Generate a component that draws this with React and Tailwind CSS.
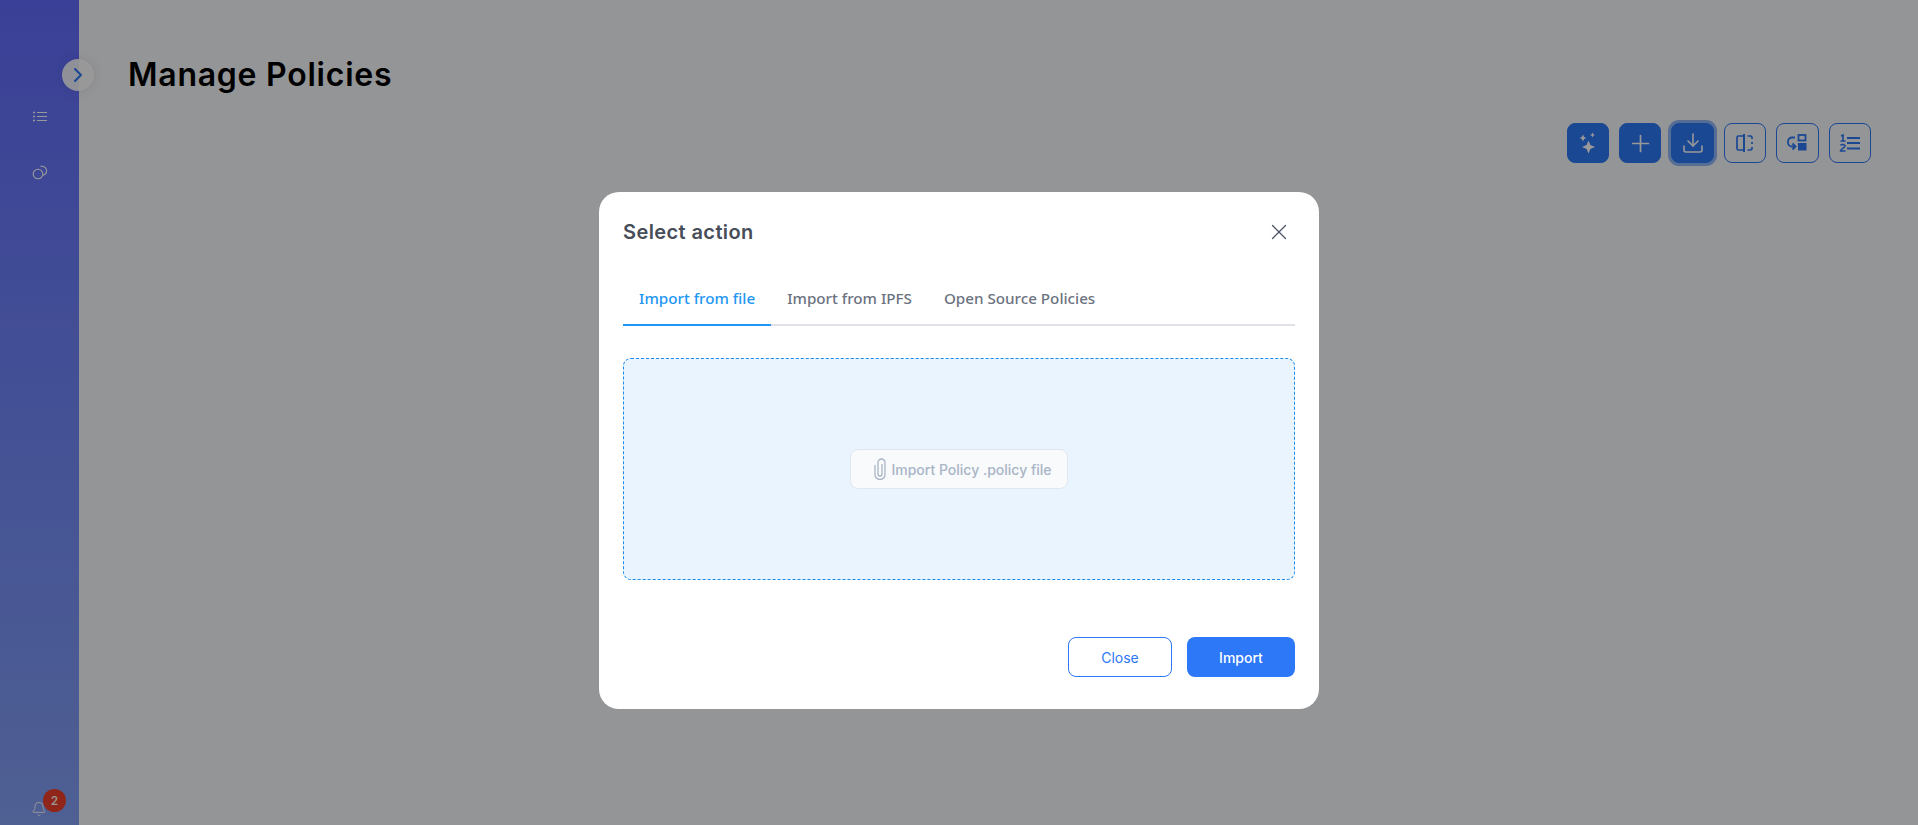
import { ChevronRight, Plus, Download, X, Bell } from 'lucide-react';

const TOOLBAR = [
  { key: 'wizard', filled: true },
  { key: 'create', filled: true },
  { key: 'import', filled: true, focus: true },
  { key: 'compare' },
  { key: 'tools' },
  { key: 'ordered' },
];

function ToolIcon({ name }) {
  if (name === 'wizard') {
    return (
      <svg width="22" height="24" viewBox="0 0 22 24" fill="currentColor">
        <path d="M11.500 9.500l1.900 4.600 4.600 1.900-4.600 1.900-1.900 4.600-1.900-4.600L5 16l4.600-1.900z" />
        <path d="M6 3.500l1.100 2.400L9.500 7 7.100 8.100 6 10.500 4.900 8.100 2.500 7l2.400-1.100z" />
        <path d="M15.500 1.500l.8 1.700 1.700.8-1.700.8-.8 1.700-.8-1.700L13 4l1.700-.8z" />
      </svg>
    );
  }
  if (name === 'create') return <Plus size={27} strokeWidth={1.5} />;
  if (name === 'import') return <Download size={24} strokeWidth={1.6} />;
  if (name === 'compare') {
    return (
      <svg width="20" height="20" viewBox="0 0 20 20" fill="none" stroke="currentColor" strokeWidth="1.700">
        <path d="M9 3H3.500A1.500 1.500 0 0 0 2 4.500v11A1.500 1.500 0 0 0 3.500 17H9" />
        <path d="M9 1v18" strokeWidth="2" />
        <path d="M12.500 3h3A1.500 1.500 0 0 1 17 4.500V6M17 9v2M17 14v1.500a1.500 1.500 0 0 1-1.500 1.500h-3" />
      </svg>
    );
  }
  if (name === 'tools') {
    return (
      <svg width="22" height="20" viewBox="0 0 22 20" fill="none" stroke="currentColor" strokeWidth="1.800">
        <rect x="12.500" y="2" width="7" height="5.500" />
        <rect x="12" y="10" width="8.500" height="7.500" fill="currentColor" stroke="none" />
        <path d="M9 4.500H6A4 4 0 0 0 2 8.500v1A4 4 0 0 0 6 13.500h2" />
        <path d="M6.500 10.500l3 3-3 3" />
      </svg>
    );
  }
  return (
    <svg width="22" height="20" viewBox="0 0 22 20" fill="none" stroke="currentColor" strokeWidth="1.800">
      <path d="M8 5h13M8 10h13M8 15.500h13" />
      <path d="M2 3l2-1v6M1.500 8h5" strokeWidth="1.600" />
      <path d="M1.500 12.500c.5-1.500 4.500-1.500 4.500.5 0 1.500-4.500 3-4.500 5h5" strokeWidth="1.600" />
    </svg>
  );
}

function ListIcon() {
  return (
    <svg width="14" height="11" viewBox="0 0 14 11" fill="none" stroke="currentColor" strokeWidth="1.200">
      <path d="M4 1.500h10M4 5.500h10M4 9.500h10" />
      <path d="M0 1.500h2M0 5.500h2M0 9.500h2" strokeWidth="1.600" />
    </svg>
  );
}

function LinkedCircles() {
  return (
    <svg width="16" height="16" viewBox="0 0 16 16" fill="none" stroke="currentColor" strokeWidth="1.100">
      <circle cx="6" cy="10" r="4.800" />
      <path d="M8.500 2.400A4.800 4.800 0 0 1 14.600 6.500a4.800 4.800 0 0 1-3.600 4.700" />
    </svg>
  );
}

function ClipIcon() {
  return (
    <svg width="12" height="22" viewBox="0 0 12 22" fill="none" stroke="currentColor" strokeWidth="1.300">
      <path d="M8 6v10a2 2 0 0 1-4 0V4.500a3.500 3.500 0 0 1 7 0V16.500a5 5 0 0 1-10 0V7" />
    </svg>
  );
}

export default function App() {
  return (
    <div className="relative h-[825px] w-full overflow-hidden flex bg-[#f7f8fc] font-['Inter',sans-serif]">
      {/* Sidebar */}
      <aside className="relative w-[79px] shrink-0 flex flex-col items-center bg-gradient-to-b from-[#626bfc] to-[#84a0f5] text-white">
        <button className="absolute right-[-15px] top-[59px] w-8 h-8 rounded-full bg-white/90 flex items-center justify-center text-[#2c78f6] shadow-[0_0_12px_rgba(0,0,0,0.1)]">
          <ChevronRight size={24} strokeWidth={2} />
        </button>
        <div className="mt-[111px] h-[11px]">
          <ListIcon />
        </div>
        <div className="mt-[42px] h-4">
          <LinkedCircles />
        </div>
        <div className="relative mt-auto mb-[8px] mr-[1px]">
          <Bell size={16} strokeWidth={1.400} />
          <span className="absolute left-[12px] top-[-12px] w-[23px] h-[23px] rounded-full bg-[#f0402a] flex items-center justify-center text-white text-[12px] font-medium">
            2
          </span>
        </div>
      </aside>

      {/* Main content */}
      <main className="flex-1 min-w-0 pl-[49px] pr-[47px]">
        <h1 className="mt-[53px] h-[44px] leading-[44px] text-[32px] font-semibold tracking-[0.75px] text-black">
          Manage Policies
        </h1>
        <div className="mt-[26px] flex justify-end gap-[10px]">
          {TOOLBAR.map(({ key, filled, focus }) => (
            <button
              key={key}
              className={`w-[42.4px] h-10 rounded-[8px] flex items-center justify-center border border-[#2c78f6] ${
                filled ? 'bg-[#2c78f6] text-white' : 'text-[#2c78f6]'
              } ${focus ? 'ring-[3px] ring-[#8fb8f8]' : ''}`}
            >
              <ToolIcon name={key} />
            </button>
          ))}
        </div>
      </main>

      {/* Backdrop + dialog */}
      <div className="absolute inset-0 bg-black/40 flex justify-center items-start pt-[192px]">
        <div className="w-[720px] h-[517px] bg-white rounded-[20px] px-6 pt-[24px] pb-8 flex flex-col">
          <div className="flex items-center justify-between h-8">
            <h2 className="text-[20px] font-semibold tracking-[0.4px] text-[#474d59]">Select action</h2>
            <X size={26} strokeWidth={1.200} className="text-[#4b5563] mr-[3px]" />
          </div>

          <div className="mt-[25px] flex border-b-2 border-[#dfe1e6] font-['Noto_Sans',sans-serif] text-[15.200px] font-medium h-[53px]">
            <div className="px-4 h-[53px] flex items-center border-b-2 border-[#2196f3] text-[#2196f3]">Import from file</div>
            <div className="px-4 h-[51px] flex items-center text-[#6b7280]">Import from IPFS</div>
            <div className="px-4 h-[51px] flex items-center text-[#6b7280]">Open Source Policies</div>
          </div>

          <div className="mt-8 h-[222px] rounded-[8px] border border-dashed border-[#1a8cf0] bg-[#eaf4fe] flex items-center justify-center">
            <div className="w-[218px] h-10 rounded-[8px] border border-[#e1e7ef] bg-[#f8fafc] pl-2 flex items-center justify-center gap-[5px] text-[#a9b5c6] text-[14px] font-medium">
              <ClipIcon />
              <span>Import Policy .policy file</span>
            </div>
          </div>

          <div className="mt-auto flex justify-end gap-[15px] text-[14px] font-medium">
            <button className="w-[104px] h-10 rounded-[8px] border border-[#2c78f6] text-[#2c78f6] font-normal">Close</button>
            <button className="w-[108px] h-10 rounded-[8px] bg-[#2c78f6] text-white">Import</button>
          </div>
        </div>
      </div>
    </div>
  );
}
